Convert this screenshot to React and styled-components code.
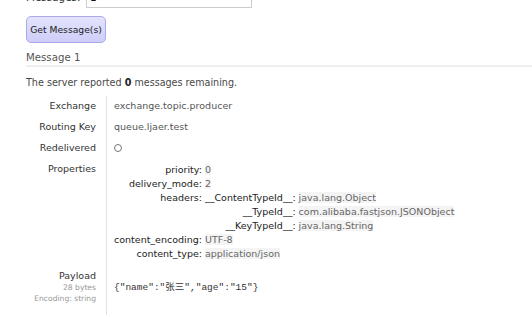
import React from "react"
import styled, { createGlobalStyle } from "styled-components"

const Global = createGlobalStyle`
    body {
        margin: 0;
        background: #fff;
        font-family: "DejaVu Sans", Verdana, sans-serif;
        font-size: 9.5px;
        color: #484848;
    }
`

const Page = styled.div`
    padding-left: 26px;
    margin-top: -14px;
    overflow: hidden;
`

const FormRow = styled.div`
    display: flex;
    align-items: center;
    height: 21px;
`

const FormLabel = styled.label`
    width: 50px;
    text-align: right;
    color: #333;
    font-size: 10.4px;
`

const Input = styled.input`
    box-sizing: border-box;
    margin-left: 10px;
    width: 166px;
    height: 22px;
    border: 1px solid #ccc;
    padding: 0 3px;
    font-family: inherit;
    font-size: 10.4px;
    color: #111;
`

const Button = styled.button`
    display: block;
    margin-top: 9px;
    height: 27px;
    width: 80px;
    padding: 0;
    border: 1px solid #a9a9ec;
    border-radius: 5px;
    background: linear-gradient(#e4e4fd, #cdcdf9);
    font-family: inherit;
    font-size: 9.2px;
    color: #222;
`

const Heading = styled.h3`
    margin: 9px 0 0;
    padding-bottom: 2px;
    font-weight: normal;
    font-size: 10.2px;
    color: #555;
    border-bottom: 2px solid #efefef;
`

const Note = styled.p`
    margin: 10px 0 7px;
    font-size: 9.6px;
    line-height: 12px;
    color: #484848;
    b {
        color: #222;
    }
`

const Facts = styled.div`
    display: grid;
    grid-template-columns: 80px 1fr;
`

const Label = styled.div`
    text-align: right;
    padding: 4px 10px 5px 0;
    line-height: 12px;
    font-size: 9.5px;
    color: #333;
`

const Value = styled.div`
    border-left: 1px solid #e2e2e2;
    padding: 4px 0 5px 7px;
    line-height: 12px;
    font-size: 9.5px;
    color: #555;
    display: flex;
    align-items: ${(p) => (p.$center ? "center" : "flex-start")};
`

const Small = styled.div`
    font-size: 7.6px;
    line-height: 11px;
    color: #999;
`

const Circle = styled.span`
    display: block;
    width: 6px;
    height: 6px;
    border: 1px solid #777;
    border-radius: 50%;
    margin-top: 2px;
`

const Mini = styled.div`
    display: grid;
    grid-template-columns: auto auto;
    justify-content: start;
    align-items: start;
`

const Key = styled.div`
    text-align: right;
    white-space: nowrap;
    line-height: 14px;
    color: #222;
    padding-right: 3px;
`

const Val = styled.div`
    line-height: 14px;
    white-space: nowrap;
    span {
        background: #f4f4f4;
        color: #666;
    }
`

const Payload = styled.code`
    font-family: "Liberation Mono", "Noto Sans CJK SC", monospace;
    font-size: 9.5px;
    color: #333;
    margin-top: 1px;
`

const Tail = styled.div`
    border-left: 1px solid #e2e2e2;
    height: 6px;
`

function App() {
    return (
        <>
            <Global />
            <Page>
                <FormRow>
                    <FormLabel>Messages:</FormLabel>
                    <Input defaultValue="1" />
                </FormRow>
                <Button>Get Message(s)</Button>
                <Heading>Message 1</Heading>
                <Note>
                    The server reported <b>0</b> messages remaining.
                </Note>
                <Facts>
                    <Label>Exchange</Label>
                    <Value>exchange.topic.producer</Value>
                    <Label>Routing Key</Label>
                    <Value>queue.ljaer.test</Value>
                    <Label>Redelivered</Label>
                    <Value>
                        <Circle />
                    </Value>
                    <Label>Properties</Label>
                    <Value>
                        <Mini>
                            <Key>priority:</Key>
                            <Val><span>0</span></Val>
                            <Key>delivery_mode:</Key>
                            <Val><span>2</span></Val>
                            <Key>headers:</Key>
                            <Mini>
                                <Key>__ContentTypeId__:</Key>
                                <Val><span>java.lang.Object</span></Val>
                                <Key>__TypeId__:</Key>
                                <Val><span>com.alibaba.fastjson.JSONObject</span></Val>
                                <Key>__KeyTypeId__:</Key>
                                <Val><span>java.lang.String</span></Val>
                            </Mini>
                            <Key>content_encoding:</Key>
                            <Val><span>UTF-8</span></Val>
                            <Key>content_type:</Key>
                            <Val><span>application/json</span></Val>
                        </Mini>
                    </Value>
                    <Label>
                        Payload
                        <Small>28 bytes</Small>
                        <Small>Encoding: string</Small>
                    </Label>
                    <Value $center>
                        <Payload>{'{"name":"张三","age":"15"}'}</Payload>
                    </Value>
                    <div />
                    <Tail />
                </Facts>
            </Page>
        </>
    )
}

export default App
